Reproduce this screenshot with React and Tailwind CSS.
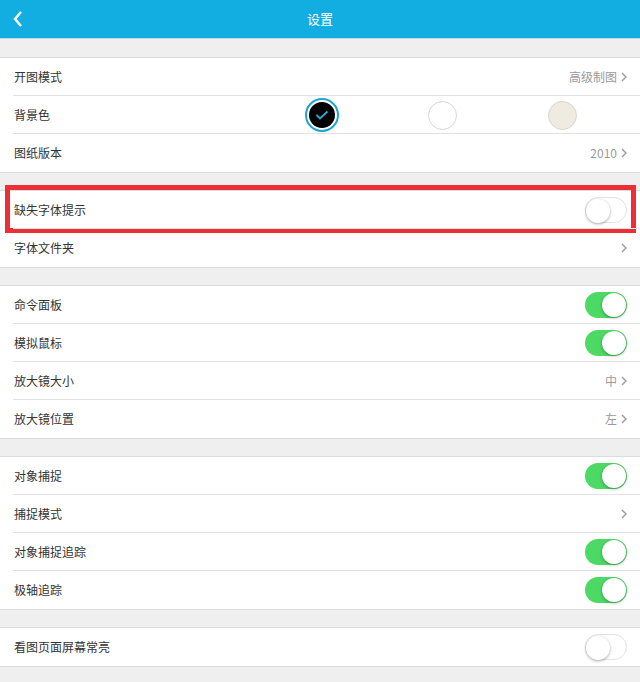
import { useState } from 'react'

const font = { fontFamily: '"Noto Sans CJK SC", "Noto Sans", sans-serif' }

function Chevron() {
  return (
    <svg width="6" height="10" viewBox="0 0 6 10" className="ml-1">
      <path d="M1 1l4 4-4 4" fill="none" stroke="#9a9a9a" strokeWidth="1.4" />
    </svg>
  )
}

function Toggle({ on }) {
  return (
    <div
      className={
        'relative w-[42px] h-[26px] rounded-full ' +
        (on ? 'bg-[#4cd964]' : 'bg-white border border-[#e3e3e3]')
      }
    >
      <div
        className={
          'absolute top-[1px] w-[24px] h-[24px] rounded-full bg-white shadow-[0_1px_3px_rgba(0,0,0,0.35)] ' +
          (on ? 'right-[1px]' : 'left-[0px] top-[0px]')
        }
      />
    </div>
  )
}

function Row({ label, value, chevron, toggle, last, children }) {
  return (
    <div className="relative h-[38px] flex items-center pl-[14px] pr-[13px]">
      <span className="text-[12px] text-[#333]">{label}</span>
      <div className="ml-auto flex items-center">
        {value && <span className="text-[12px] text-[#9a9a9a]">{value}</span>}
        {chevron && <Chevron />}
        {toggle !== undefined && <Toggle on={toggle} />}
      </div>
      {children}
      {!last && <div className="absolute left-[13px] right-0 bottom-0 h-px bg-[#e2e2e2]" />}
    </div>
  )
}

function Section({ children }) {
  return <div className="bg-white border-y border-[#dcdcdc]">{children}</div>
}

function Gap() {
  return <div className="h-[17px]" />
}

export default function App() {
  const [bg] = useState(0)

  return (
    <div className="w-[640px] h-[682px] bg-[#efefef] overflow-hidden" style={font}>
      <header className="h-[38px] bg-[#12aee2] flex items-center relative">
        <svg width="12" height="18" viewBox="0 0 12 18" className="ml-[12px]">
          <path d="M9 2L3 9l6 7" fill="none" stroke="white" strokeWidth="2.4" />
        </svg>
        <h1 className="absolute inset-x-0 text-center text-white text-[13px]">设置</h1>
      </header>
      <div className="h-px bg-[#b9dcea]" />
      <div className="h-[18px]" />

      <Section>
        <Row label="开图模式" value="高级制图" chevron />
        <div className="relative h-[38px] flex items-center pl-[14px]">
          <span className="text-[12px] text-[#333]">背景色</span>
          <div className="ml-auto flex pr-[18px]">
            <div className="w-[120px] flex justify-center">
              <div className="w-[34px] h-[34px] rounded-full border-2 border-[#1da3d4] flex items-center justify-center">
                <div className="w-[26px] h-[26px] rounded-full bg-black flex items-center justify-center">
                  <svg width="14" height="10" viewBox="0 0 14 10">
                    <path d="M1.5 5l3.5 3.5L12.5 1.5" fill="none" stroke="#2ea8d8" strokeWidth="1.8" />
                  </svg>
                </div>
              </div>
            </div>
            <div className="w-[120px] flex justify-center items-center">
              <div className="w-[29px] h-[29px] rounded-full bg-white border border-[#d6d6d6]" />
            </div>
            <div className="w-[120px] flex justify-center items-center">
              <div className="w-[29px] h-[29px] rounded-full bg-[#efebe0] border border-[#d9d6cc]" />
            </div>
          </div>
          <div className="absolute left-[13px] right-0 bottom-0 h-px bg-[#e2e2e2]" />
        </div>
        <Row label="图纸版本" value="2010" chevron last />
      </Section>
      <Gap />

      <Section>
        <Row label="缺失字体提示" toggle={false}>
          <div className="absolute left-[5px] right-[4px] top-[-6px] bottom-[-4px] border-[5px] border-[#ec2f37]" />
        </Row>
        <Row label="字体文件夹" chevron last />
      </Section>
      <Gap />

      <Section>
        <Row label="命令面板" toggle={true} />
        <Row label="模拟鼠标" toggle={true} />
        <Row label="放大镜大小" value="中" chevron />
        <Row label="放大镜位置" value="左" chevron last />
      </Section>
      <Gap />

      <Section>
        <Row label="对象捕捉" toggle={true} />
        <Row label="捕捉模式" chevron />
        <Row label="对象捕捉追踪" toggle={true} />
        <Row label="极轴追踪" toggle={true} last />
      </Section>
      <Gap />

      <Section>
        <Row label="看图页面屏幕常亮" toggle={false} last />
      </Section>
    </div>
  )
}
